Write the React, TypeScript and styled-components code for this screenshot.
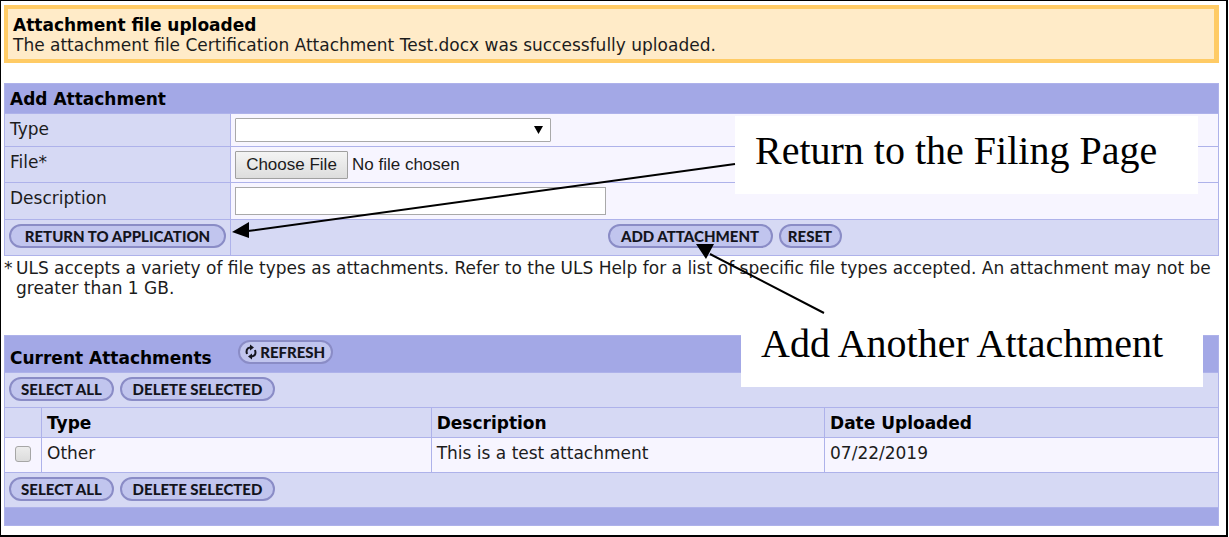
import React from "react";
import styled, { createGlobalStyle } from "styled-components";

const c = {
  bar: "#a3a8e6",
  soft: "#d6d9f4",
  pale: "#f7f5ff",
  line: "#aeb2ea",
};

const GlobalStyle = createGlobalStyle`
  * { box-sizing: border-box; }
  body {
    margin: 0;
    background: #fff;
    color: #1c1c1c;
    font: 17px/20px "DejaVu Sans", Verdana, sans-serif;
  }
`;

const Page = styled.main`
  position: relative;
  margin-right: 1px;
  padding: 4px 7px 9px 3px;
  border: solid #000;
  border-width: 1px 2px 2px 1px;
`;

const Banner = styled.section`
  margin-bottom: 20px;
  padding: 6px 5px 4px;
  border: 4px solid #ffcb65;
  border-right-width: 5px;
  background: #ffebc8;
`;

const BannerTitle = styled.h1`
  margin: 0;
  color: #000;
  font-size: 17px;
  line-height: 20px;
`;

const BannerText = styled.p`
  margin: 0;
`;

const Grid = styled.table`
  width: 100%;
  table-layout: fixed;
  border-collapse: collapse;
  border: 1px solid ${c.line};
`;

const Row = styled.tr<{ $h: number }>`
  height: ${(p) => p.$h}px;
`;

const Cell = styled.td<{ $bg: string; $pad?: string }>`
  padding: ${(p) => p.$pad ?? "5px 5px 4px"};
  border: 1px solid ${c.line};
  background: ${(p) => p.$bg};
  text-align: left;
  vertical-align: top;
`;

const HeadCell = styled(Cell).attrs({ as: "th" })`
  color: #000;
  font-weight: bold;
`;

const SectionTitle = styled.h2`
  margin: 0;
  color: #000;
  font-size: 17px;
  line-height: 20px;
`;

const TitleRow = styled.div`
  display: flex;
  align-items: flex-end;
  gap: 26px;
  height: 28px;
`;

const RefreshWrap = styled.div`
  align-self: flex-start;
`;

const Buttons = styled.div<{ $center?: boolean }>`
  display: flex;
  gap: 6px;
  justify-content: ${(p) => (p.$center ? "center" : "flex-start")};
`;

const Pill = styled.button<{ $w: number }>`
  display: flex;
  align-items: center;
  justify-content: center;
  gap: 3px;
  width: ${(p) => p.$w}px;
  height: 24px;
  padding: 0;
  border: 2px solid #8a8cc6;
  border-radius: 12px;
  background: #c1c5ee;
  color: #14141c;
  font: 900 15px/20px Lato, "Gill Sans", sans-serif;
  white-space: nowrap;
`;

const Select = styled.select`
  display: block;
  width: 316px;
  height: 24px;
  appearance: none;
  border: 1px solid #a9a9a9;
  border-radius: 1px;
  background: transparent;
`;

const SelectWrap = styled.div`
  display: grid;
  width: 316px;
  background: #fff;
  align-items: center;
  > * { grid-area: 1 / 1; }
  > svg { justify-self: end; margin-right: 8px; pointer-events: none; }
`;

const TextInput = styled.input`
  display: block;
  width: 371px;
  height: 28px;
  padding: 0 4px;
  border: 1px solid #a9a9a9;
  background: #fff;
`;

const FileInput = styled.input`
  display: block;
  height: 28px;
  color: #1c1c1c;
  font: 17px/20px "Liberation Sans", Arial, sans-serif;
  &::file-selector-button {
    width: 113px;
    height: 28px;
    margin: 0 4px 0 0;
    padding: 0;
    border: 1px solid #a0a0a0;
    border-radius: 1px;
    background: linear-gradient(#f4f4f4, #dddddd);
    color: #1c1c1c;
    font: 17px/20px "Liberation Sans", Arial, sans-serif;
  }
`;

const Check = styled.input`
  display: block;
  width: 16px;
  height: 16px;
  margin: 3px 0 0 5px;
  appearance: none;
  border: 1px solid #a6a6a6;
  border-radius: 3px;
  background: linear-gradient(#ececec, #dcdcdc);
`;

const Note = styled.p`
  display: flex;
  margin: 2px 0 37px;
`;

const NoteMark = styled.span`
  flex: 0 0 12px;
`;

const Callout = styled.div<{ $x: number; $y: number; $w: number; $h: number }>`
  position: absolute;
  left: ${(p) => p.$x}px;
  top: ${(p) => p.$y}px;
  width: ${(p) => p.$w}px;
  height: ${(p) => p.$h}px;
  padding: 12px 20px;
  background: #fff;
  color: #000;
  font: 40px/46px "Liberation Serif", "Times New Roman", serif;
  white-space: nowrap;
`;

const Arrows = styled.svg`
  position: absolute;
  left: -1px;
  top: -1px;
  pointer-events: none;
`;

const RefreshIcon = () => (
  <svg width="12" height="16" viewBox="0 0 12 16" fill="none" stroke="#14141c" strokeWidth="2" aria-hidden="true">
    <path d="M2 10C1 7 1.500 4 5 3.500" />
    <path d="M10 6C11 9 10.500 12 7 12.500" />
    <path d="M5 0.500L9 3.500L5 6.500z" fill="#14141c" stroke="none" />
    <path d="M7 15.500L3 12.500L7 9.500z" fill="#14141c" stroke="none" />
  </svg>
);

const SelectionButtons = () => (
  <Buttons>
    <Pill type="button" $w={105}>SELECT ALL</Pill>
    <Pill type="button" $w={155}>DELETE SELECTED</Pill>
  </Buttons>
);

export default function App() {
  return (
    <>
      <GlobalStyle />
      <Page>
        <Banner>
          <BannerTitle>Attachment file uploaded</BannerTitle>
          <BannerText>The attachment file Certification Attachment Test.docx was successfully uploaded.</BannerText>
        </Banner>

        <form onSubmit={(e) => e.preventDefault()}>
          <Grid>
            <colgroup>
              <col style={{ width: 226 }} />
              <col />
            </colgroup>
            <tbody>
              <Row $h={30}>
                <Cell $bg={c.bar} colSpan={2}><SectionTitle>Add Attachment</SectionTitle></Cell>
              </Row>
              <Row $h={33}>
                <Cell $bg={c.soft}><label htmlFor="type">Type</label></Cell>
                <Cell $bg={c.pale} $pad="4px">
                  <SelectWrap>
                    <Select id="type" />
                    <svg width="9" height="8" aria-hidden="true"><path d="M0 0h9L4.500 8z" fill="#000" /></svg>
                  </SelectWrap>
                </Cell>
              </Row>
              <Row $h={36}>
                <Cell $bg={c.soft}><label htmlFor="file">File*</label></Cell>
                <Cell $bg={c.pale} $pad="4px 4px 3px"><FileInput id="file" type="file" /></Cell>
              </Row>
              <Row $h={37}>
                <Cell $bg={c.soft}><label htmlFor="description">Description</label></Cell>
                <Cell $bg={c.pale} $pad="4px"><TextInput id="description" type="text" /></Cell>
              </Row>
              <Row $h={36}>
                <Cell $bg={c.soft} $pad="4px"><Pill type="button" $w={217}>RETURN TO APPLICATION</Pill></Cell>
                <Cell $bg={c.soft} $pad="4px">
                  <Buttons $center>
                    <Pill type="submit" $w={165}>ADD ATTACHMENT</Pill>
                    <Pill type="reset" $w={63}>RESET</Pill>
                  </Buttons>
                </Cell>
              </Row>
            </tbody>
          </Grid>
        </form>

        <Note>
          <NoteMark>*</NoteMark>
          <span>ULS accepts a variety of file types as attachments. Refer to the ULS Help for a list of specific file types accepted. An attachment may not be greater than 1 GB.</span>
        </Note>

        <Grid>
          <colgroup>
            <col style={{ width: 37 }} />
            <col style={{ width: "32.1%" }} />
            <col style={{ width: "32.4%" }} />
            <col />
          </colgroup>
          <tbody>
            <Row $h={37}>
              <Cell $bg={c.bar} $pad="4px 5px" colSpan={4}>
                <TitleRow>
                  <SectionTitle>Current Attachments</SectionTitle>
                  <RefreshWrap><Pill type="button" $w={95}><RefreshIcon />REFRESH</Pill></RefreshWrap>
                </TitleRow>
              </Cell>
            </Row>
            <Row $h={35}>
              <Cell $bg={c.soft} $pad="4px" colSpan={4}><SelectionButtons /></Cell>
            </Row>
            <Row $h={30}>
              <Cell $bg={c.soft} />
              <HeadCell $bg={c.soft}>Type</HeadCell>
              <HeadCell $bg={c.soft}>Description</HeadCell>
              <HeadCell $bg={c.soft}>Date Uploaded</HeadCell>
            </Row>
            <Row $h={35}>
              <Cell $bg={c.pale}><Check type="checkbox" aria-label="Select Other attachment" /></Cell>
              <Cell $bg={c.pale}>Other</Cell>
              <Cell $bg={c.pale}>This is a test attachment</Cell>
              <Cell $bg={c.pale}>07/22/2019</Cell>
            </Row>
            <Row $h={35}>
              <Cell $bg={c.soft} $pad="4px" colSpan={4}><SelectionButtons /></Cell>
            </Row>
            <Row $h={18}>
              <Cell $bg={c.bar} $pad="0" colSpan={4} />
            </Row>
          </tbody>
        </Grid>

        <Callout $x={734} $y={115} $w={463} $h={78}>Return to the Filing Page</Callout>
        <Callout $x={740} $y={308} $w={462} $h={78}>Add Another Attachment</Callout>
        <Arrows width="840" height="330" aria-hidden="true">
          <path d="M735 164L248 231M824 313L710 254" stroke="#000" strokeWidth="2" />
          <path d="M232 232L249 222V238zM696 244h18l-8 15z" />
        </Arrows>
      </Page>
    </>
  );
}
